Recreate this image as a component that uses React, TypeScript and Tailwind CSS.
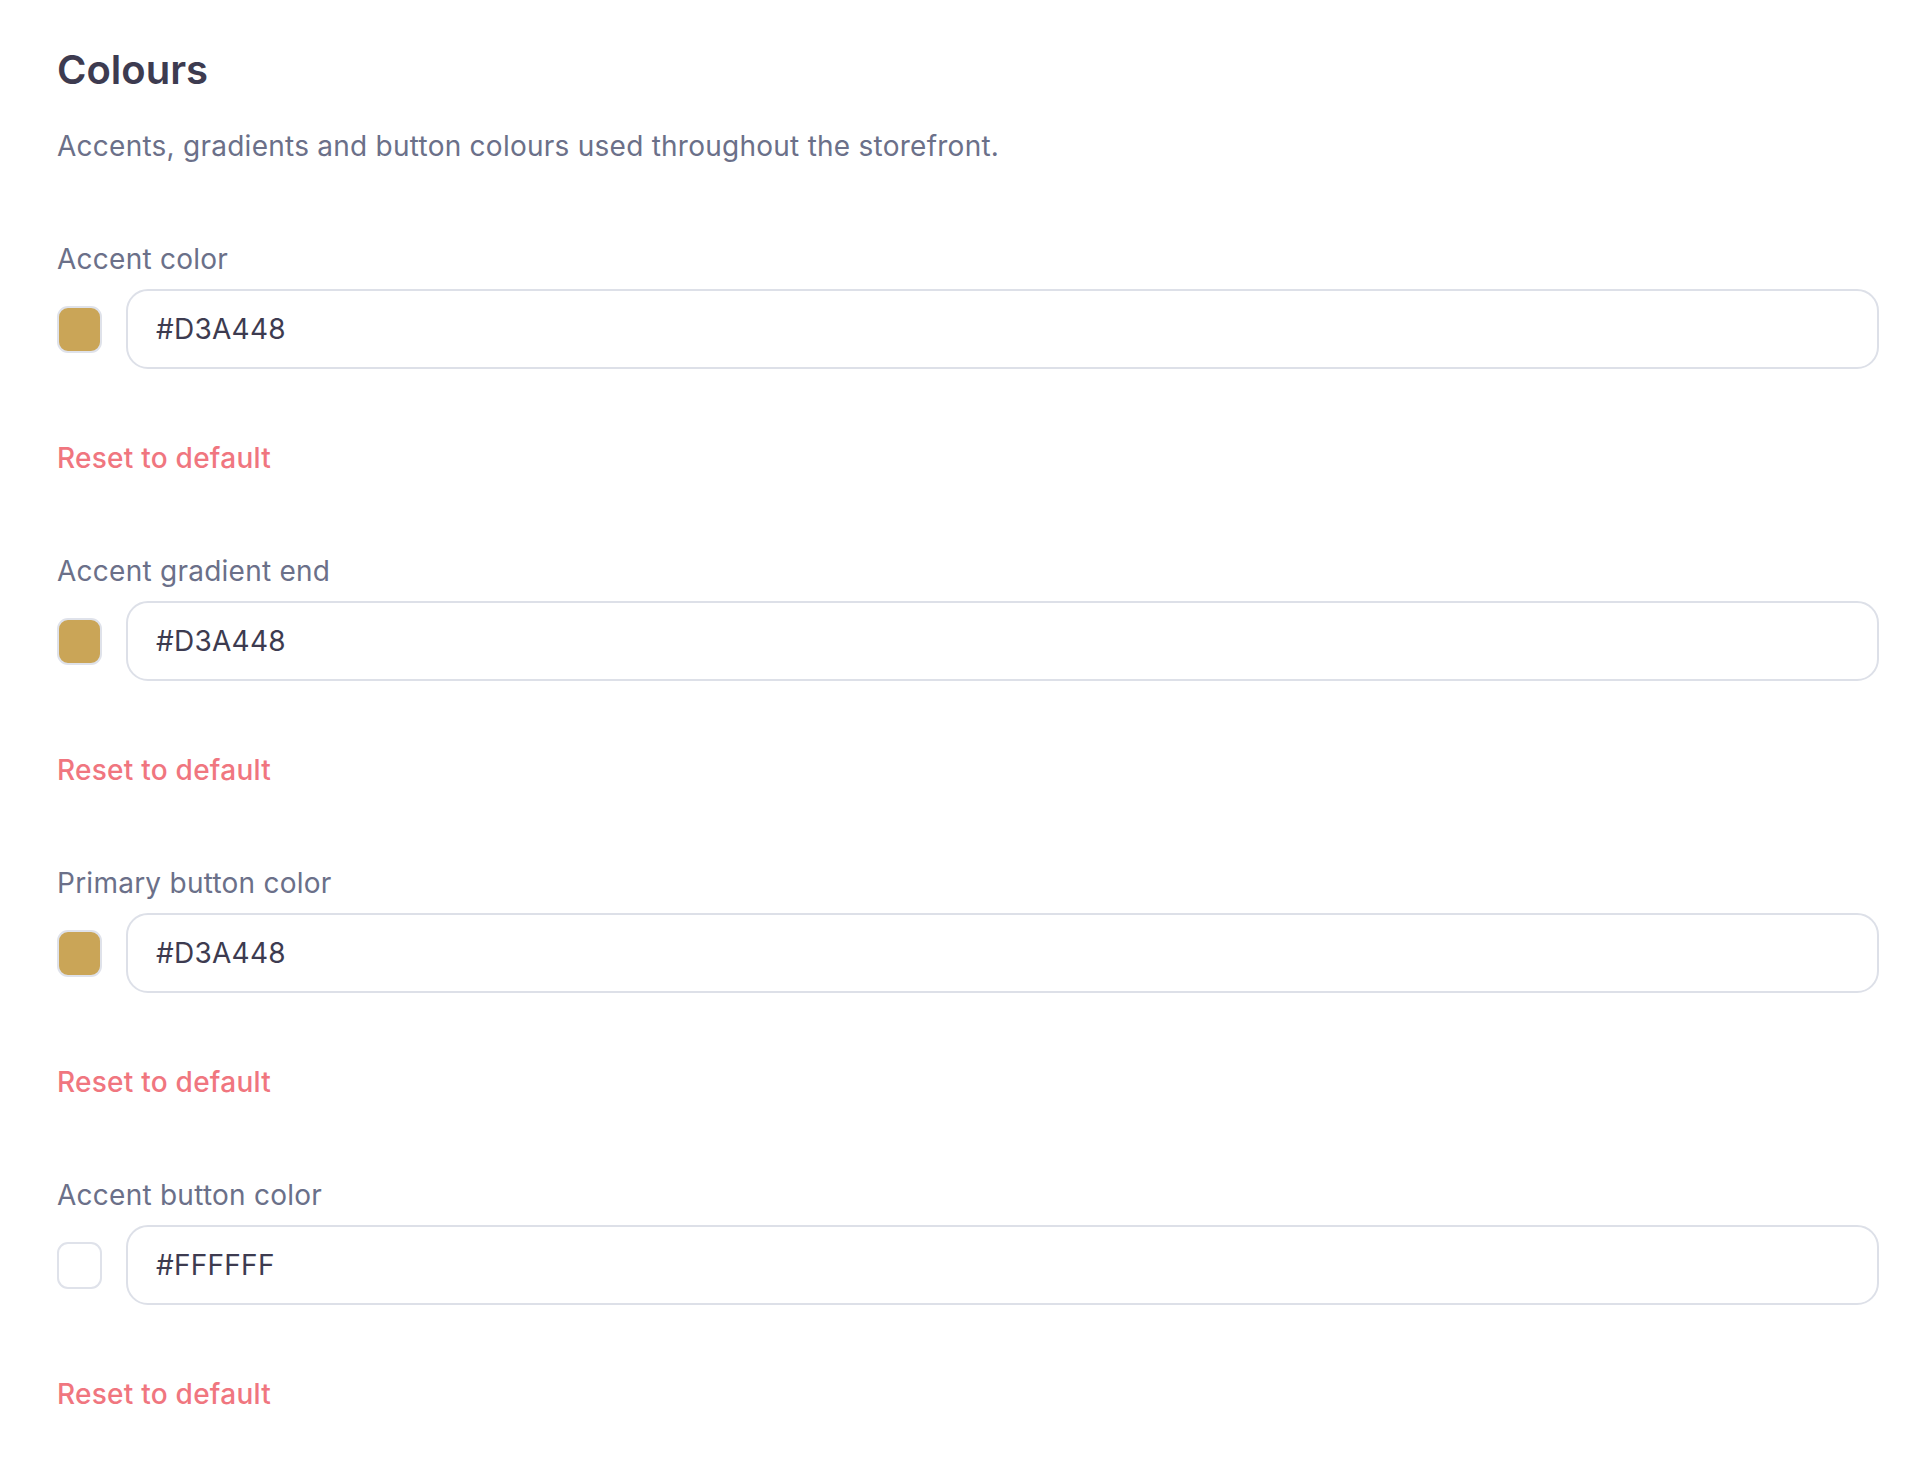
import { useState } from 'react';

interface ColourField {
  id: string;
  label: string;
  value: string;
  swatch: string;
}

const fields: ColourField[] = [
  { id: 'accent', label: 'Accent color', value: '#D3A448', swatch: 'bg-[#caa557]' },
  { id: 'accent-end', label: 'Accent gradient end', value: '#D3A448', swatch: 'bg-[#caa557]' },
  { id: 'primary-button', label: 'Primary button color', value: '#D3A448', swatch: 'bg-[#caa557]' },
  { id: 'accent-button', label: 'Accent button color', value: '#FFFFFF', swatch: 'bg-white' },
];

function ColourRow({ field }: { field: ColourField }) {
  const [value, setValue] = useState(field.value);

  return (
    <div className="flex flex-col">
      <label htmlFor={field.id} className="text-[28px] leading-[42px] tracking-[0.25px] text-[#6b7089]">
        {field.label}
      </label>
      <div className="mt-[9px] flex items-center gap-[24px]">
        {/* swatch */}
        <div
          className={`w-[45px] h-[47px] shrink-0 rounded-[11px] border-2 border-[#dfe2ea] ${field.swatch}`}
        />
        <input
          id={field.id}
          value={value}
          onChange={(e) => setValue(e.target.value)}
          className="flex-1 min-w-0 h-[80px] rounded-[22px] border-2 border-[#dde0e8] bg-white pl-[28px] text-[28px] leading-[42px] tracking-[0.25px] text-[#3d3b50] outline-none"
        />
      </div>
      <button
        type="button"
        className="mt-[68px] self-start text-[28px] leading-[42px] tracking-[0.25px] font-medium text-[#f0767f]"
      >
        Reset to default
      </button>
    </div>
  );
}

export default function App() {
  return (
    <div
      className="min-h-screen bg-white pl-[57px] pr-[49px] pt-[42px]"
      style={{ fontFamily: 'Inter, "Noto Sans", sans-serif' }}
    >
      <h2 className="text-[40px] leading-[56px] font-semibold text-[#3d3b50]">Colours</h2>
      <p className="mt-[27px] text-[28px] leading-[42px] tracking-[0.25px] text-[#6b7089]">
        Accents, gradients and button colours used throughout the storefront.
      </p>

      <div className="mt-[71px] flex flex-col gap-[71px]">
        {fields.map((field) => (
          <ColourRow key={field.id} field={field} />
        ))}
      </div>
    </div>
  );
}
